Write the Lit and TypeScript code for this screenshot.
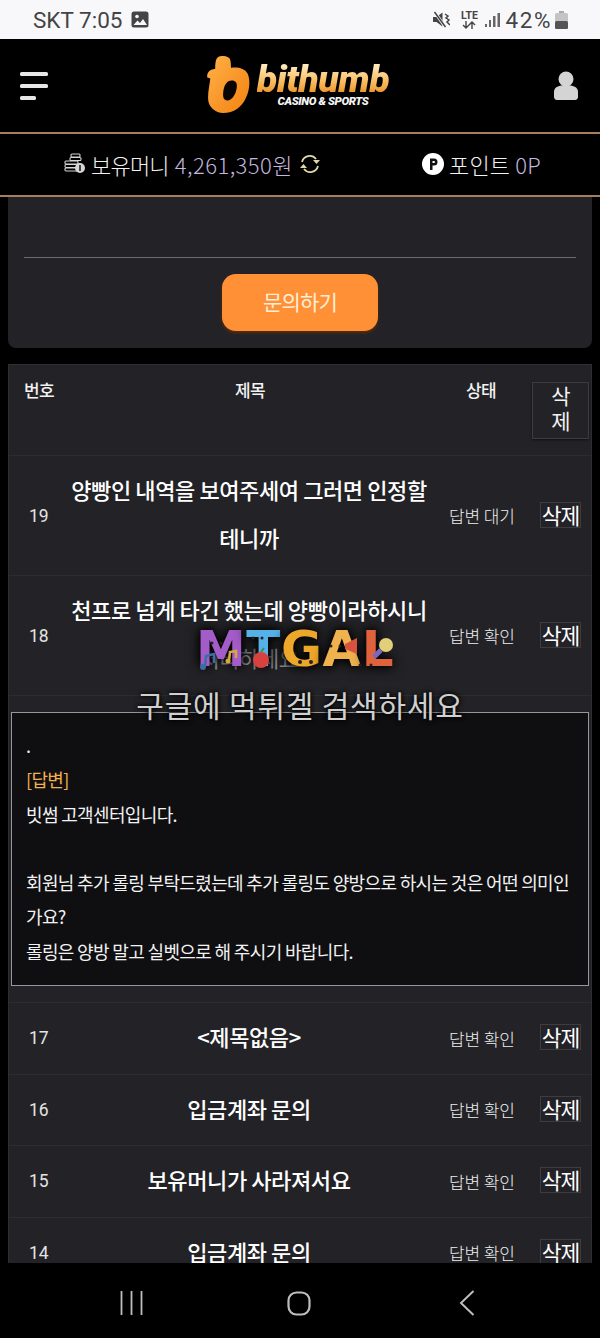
import { LitElement, html, css, svg } from "lit";
import { customElement } from "lit/decorators.js";

const rows = [
  { n: "17", t: "<제목없음>" },
  { n: "16", t: "입금계좌 문의" },
  { n: "15", t: "보유머니가 사라져서요" },
  { n: "14", t: "입금계좌 문의" },
];

@customElement("app-root")
export class AppRoot extends LitElement {
  static styles = css`
    :host { display: block; width: 600px; height: 1338px; background: #000; overflow: hidden; position: relative;
      font-family: "Noto Sans CJK KR", "Noto Sans", sans-serif; color: #f2f2f2; }
    * { box-sizing: border-box; }
    .page { display: flex; flex-direction: column; height: 1338px; }
    .status { height: 39px; flex: none; background: #f8f8fb; color: #444; display: flex; align-items: center; padding: 0 32px 0 33px; font-family: "Roboto", sans-serif; font-size: 22.5px; gap: 9px; }
    .status .sp { flex: 1; }
    .status .r { display: flex; align-items: center; gap: 5px; }
    .pct { letter-spacing: 1.6px; margin-right: -2px; }
    .lte { font: 700 10.5px/10px Roboto, sans-serif; width: 18px; margin: 0 2px 0 5px; display: flex; flex-direction: column; align-items: center; }
    .top { height: 95px; flex: none; border-bottom: 2px solid #a87c5c; display: flex; align-items: center; justify-content: space-between; padding: 0 22px 0 20px; background: #000; }
    .logo { display: flex; align-items: flex-start; gap: 6px; margin-right: 6px; margin-top: -2px; }
    .lt { display: flex; flex-direction: column; align-items: center; margin-top: 7px; }
    .bit { font-family: "Roboto", sans-serif; font-style: italic; font-weight: 900; font-size: 37.5px; line-height: 33px; letter-spacing: -0.5px;
      background: linear-gradient(#fff0c8, #f9b85a 60%, #e88a20); -webkit-background-clip: text; background-clip: text; color: transparent; }
    .cas { font-family: "Roboto", sans-serif; font-style: italic; font-weight: 900; font-size: 11.5px; line-height: 13px; letter-spacing: -0.4px; color: #f5f5f5; margin-top: -1px; margin-left: 0; }
    .bal { height: 63px; flex: none; border-bottom: 2px solid #a87c5c; display: flex; align-items: center; background: #000; font-size: 22px; font-weight: 300; letter-spacing: -0.8px; padding-bottom: 1px; }
    .bal .a { margin-left: 64px; display: flex; align-items: center; gap: 5px; }
    .bal .b { margin-left: 100px; display: flex; align-items: center; gap: 5px; }
    .pur { color: #c4b6de; letter-spacing: 0.45px; margin-left: 2px; }
    .pt { letter-spacing: 0.2px; }
    .pt .pur { letter-spacing: 0; margin-left: 0; }
    .main { flex: 1; min-height: 0; overflow: hidden; padding: 0 8px; display: flex; flex-direction: column; gap: 16px; }
    .form { height: 151px; flex: none; background: #232327; border-radius: 0 0 8px 8px; padding: 60px 16px 0; display: flex; flex-direction: column; align-items: center; }
    .form hr { width: 100%; margin: 0; border: 0; border-top: 1px solid #6d6d71; }
    .btn { margin-top: 16px; width: 156px; height: 57px; border-radius: 14px; background: #ff9036; box-shadow: 0 2px 3px #5a2c08; display: flex; align-items: center; justify-content: center; font-size: 21px; letter-spacing: -0.8px; color: #fdeed8; font-weight: 400; padding-bottom: 3px; }
    .list { flex: none; background: #232327; border: 1px solid #2e2e32; }
    .head { height: 91px; display: grid; grid-template-columns: 61px 361px 1fr; position: relative; border-bottom: 1px solid #2d2d31; font-size: 17px; font-weight: 500; letter-spacing: -0.6px; }
    .hc { padding-top: 13px; line-height: 24px; }
    .c1 { padding-left: 15px; }
    .c2 { padding-left: 165px; }
    .c3 { padding-left: 35px; }
    .hdel { position: absolute; right: 2px; top: 17px; width: 57px; height: 57px; border: 1px solid #3d3d41; box-shadow: 0 1px 2px #111; font-size: 21px; font-weight: 400; line-height: 25px; text-align: center; }
    .row { display: grid; grid-template-columns: 60px 362px 1fr; align-items: center; border-bottom: 1px solid #2d2d31; height: 71.5px; }
    .row.tall { height: 120px; }
    .num { padding-left: 20px; font-family: "Roboto", sans-serif; font-size: 17.5px; font-weight: 400; color: #e4e4e4; }
    .ttl { text-align: center; font-size: 22px; font-weight: 500; line-height: 48px; letter-spacing: -0.4px; color: #fff; margin-left: -2px; padding-bottom: 4px; white-space: nowrap; }
    .tall .ttl { padding-bottom: 6px; }
    .dim { color: #8f8f93; font-weight: 400; }
    .st { font-size: 17px; font-weight: 300; letter-spacing: -0.1px; color: #eee; display: flex; align-items: center; justify-content: space-between; padding: 0 10px 0 18px; white-space: nowrap; }
    .del { width: 41px; height: 26px; border: 1px solid #3d3d41; font-size: 21.5px; font-weight: 400; line-height: 23px; letter-spacing: -1px; text-align: center; color: #fff; margin-top: -2px; }
    .replywrap { height: 307px; padding: 16px 2px; border-bottom: 1px solid #2d2d31; }
    .reply { height: 274px; background: #0f0f11; border: 1px solid #97979a; padding: 15px 14px 0; font-size: 18px; line-height: 34.3px; letter-spacing: -0.65px; font-weight: 400; color: #f2f2f2; white-space: nowrap; }
    .org { color: #f2b04f; }
    .nav { height: 75px; flex: none; background: #000; display: flex; align-items: center; padding-top: 5px; }
    .wm { position: absolute; left: 0; right: 0; top: 622px; text-align: center; pointer-events: none; }
    .mt { font-family: "DejaVu Sans", sans-serif; font-weight: 700; font-size: 50px; line-height: 54px; letter-spacing: 0.5px; position: relative; left: -5px; text-shadow: 0 0 8px #000, 0 0 14px #000; }
    .m1 { color: #a35cc8; }
    .m2 { color: #55b2e8; }
    .m3 { color: #eda82c; }
    .m4 { color: #efb24e; }
    .m5 { color: #e0623c; }
    .deco { position: absolute; left: 190px; top: 0; }
    .gg { font-size: 30px; font-weight: 400; line-height: 40px; color: #d0d0d0; letter-spacing: 0.8px; margin-top: 8px; text-shadow: 0 0 5px #000, 0 0 5px #000; }
  `;

  icon(d: unknown, w: number, h: number) {
    return html`<svg width=${w} height=${h} viewBox="0 0 ${w} ${h}" style="display:block;flex:none">${d}</svg>`;
  }

  del() { return html`<span class="del">삭제</span>`; }

  render() {
    return html`<div class="page">
      <div class="status">
        <span>SKT 7:05</span>
        ${this.icon(svg`<rect x="0.500" y="0.500" width="17" height="16" rx="2.500" fill="#444"/><circle cx="6" cy="5.500" r="1.800" fill="#f8f8fb"/><path d="M2.500 14l4-4.500 2.500 2.500 3-4 4 6z" fill="#f8f8fb"/>`, 18, 17)}
        <span class="sp"></span>
        <div class="r">
          ${this.icon(svg`<path d="M0 6h3.500l6-4.500v14l-6-4.500H0z" fill="#444"/><path d="M1 0l12 17" stroke="#f8f8fb" stroke-width="3"/><path d="M1.500 1l11 15" stroke="#444" stroke-width="1.500"/><path d="M12 3l3 2-2 2 3 2-2 2 3 3" stroke="#444" stroke-width="1.500" fill="none"/>`, 17, 17)}
          <span class="lte">LTE
            <svg width="16" height="8" viewBox="0 0 16 8" style="display:block"><path d="M5 0v7M2 4l3 3 3-3M11 8V1M8 4l3-3 3 3" fill="none" stroke="#444" stroke-width="1.400"/></svg>
          </span>
          ${this.icon(svg`<rect x="0" y="12" width="2" height="3" fill="#666"/><rect x="4" y="8" width="2" height="7" fill="#666"/><rect x="8" y="4" width="2.500" height="11" fill="#666"/><rect x="12.500" y="1" width="2.500" height="14" fill="#666"/>`, 15, 15)}
          <span class="pct">42%</span>
          ${this.icon(svg`<rect x="4" y="0" width="5" height="2" fill="#aaa"/><rect x="0" y="2" width="13" height="16" rx="1.500" fill="#c4c4c4"/><rect x="0" y="10" width="13" height="8" rx="1.500" fill="#555"/>`, 13, 18)}
        </div>
      </div>

      <div class="top">
        ${this.icon(svg`<g fill="#e6e6e6"><rect x="0" y="0" width="28" height="4" rx="1.500"/><rect x="0" y="12" width="28" height="4" rx="1.500"/><rect x="0" y="24" width="16" height="4" rx="1.500"/></g>`, 28, 28)}
        <div class="logo">
          <svg width="44" height="57" viewBox="0 0 44 58" style="display:block;flex:none">
            <defs><linearGradient id="lg" x1="0" y1="0" x2="1" y2="1"><stop offset="0" stop-color="#ffb347"/><stop offset=".55" stop-color="#f9962a"/><stop offset="1" stop-color="#f6820f"/></linearGradient></defs>
            <path d="M11 1c4-2 10-1 12 2 1 3 1 7 1 9 6-1 14 0 17 6 3 7 2 17-2 25-4 9-12 15-23 15C8 58 2 52 1 46c-1-7 1-15 2-23L0 22c-1-3 1-7 4-8l4-1c0-4 0-10 3-12z" fill="url(#lg)"/>
            <path d="M21 26c4-2 9-1 9 4 0 6-3 13-8 15-4 1-6-1-6-5 0-5 1-11 5-14z" fill="#0a0500"/>
          </svg>
          <div class="lt"><div class="bit">bithumb</div><div class="cas">CASINO &amp; SPORTS</div></div>
        </div>
        ${this.icon(svg`<circle cx="12" cy="8" r="7.500" fill="#d4d4d4"/><path d="M0 26v-5c0-5 5-7 12-7s12 2 12 7v5c0 1.500-1 3-3 3H3c-2 0-3-1.500-3-3z" fill="#d4d4d4"/>`, 24, 29)}
      </div>

      <div class="bal">
        <div class="a">
          ${this.icon(svg`<g fill="none" stroke="#d6d6d6" stroke-width="1.100"><rect x="7" y="1" width="9" height="3" rx="1"/><rect x="6" y="4.500" width="11" height="3" rx="1"/><rect x="1" y="8" width="13" height="3" rx="1"/><rect x="1" y="11.500" width="13" height="3" rx="1"/><rect x="1" y="15" width="13" height="3" rx="1"/></g><circle cx="16" cy="15" r="5" fill="#d6d6d6"/><path d="M16 12v6" stroke="#111" stroke-width="1.500"/>`, 22, 22)}
          <span>보유머니 <span class="pur">4,261,350원</span></span>
          ${this.icon(svg`<g fill="none" stroke="#e3d9a6" stroke-width="1.800"><path d="M4 9a8 8 0 0 1 14-3"/><path d="M20 13a8 8 0 0 1-14 3"/></g><path d="M15 7h7l-3.500 4zM9 15H2l3.500-4z" fill="#e3d9a6"/>`, 24, 22)}
        </div>
        <div class="b">
          ${this.icon(svg`<circle cx="11" cy="11" r="11" fill="#fff"/><path d="M8 5.500h4a3.500 3.500 0 0 1 0 7h-1.500V17H8zM10.500 8v2h1.500a1 1 0 0 0 0-2z" fill="#111"/>`, 22, 22)}
          <span class="pt">포인트 <span class="pur">0P</span></span>
        </div>
      </div>

      <div class="main">
        <div class="form"><hr /><div class="btn">문의하기</div></div>
        <div class="list">
          <div class="head"><div class="hc c1">번호</div><div class="hc c2">제목</div><div class="hc c3">상태</div><div class="hdel">삭<br />제</div></div>
          <div class="row tall"><div class="num">19</div><div class="ttl">양빵인 내역을 보여주세여 그러면 인정할<br />테니까</div><div class="st"><span>답변 대기</span>${this.del()}</div></div>
          <div class="row tall"><div class="num">18</div><div class="ttl">천프로 넘게 타긴 했는데 양빵이라하시니<br /><span class="dim">처리하세요</span></div><div class="st"><span>답변 확인</span>${this.del()}</div></div>
          <div class="replywrap"><div class="reply">.<br /><span class="org">[답변]</span><br />빗썸 고객센터입니다.<br /><br />회원님 추가 롤링 부탁드렸는데 추가 롤링도 양방으로 하시는 것은 어떤 의미인<br />가요?<br />롤링은 양방 말고 실벳으로 해 주시기 바랍니다.</div></div>
          ${rows.map((r) => html`<div class="row"><div class="num">${r.n}</div><div class="ttl">${r.t}</div><div class="st"><span>답변 확인</span>${this.del()}</div></div>`)}
        </div>
      </div>

      <div class="nav">
        <div style="margin-left:120px">${this.icon(svg`<path d="M1.500 0v24M11.500 0v24M21.500 0v24" stroke="#bdbdbd" stroke-width="1.800"/>`, 24, 24)}</div>
        <div style="margin-left:143px">${this.icon(svg`<rect x="1.500" y="1.500" width="21" height="22" rx="8" fill="none" stroke="#bdbdbd" stroke-width="2.200"/>`, 25, 25)}</div>
        <div style="margin-left:147px">${this.icon(svg`<path d="M14.500 1L2 13l12.500 12" fill="none" stroke="#bdbdbd" stroke-width="2"/>`, 16, 26)}</div>
      </div>
    </div>

    <div class="wm">
      <div class="mt"><span class="m1">M</span><span class="m2">T</span><span class="m3">G</span><span class="m4">A</span><span class="m5">L</span>
        <svg class="deco" width="220" height="54" viewBox="0 0 220 54">
          <circle cx="76" cy="38" r="8" fill="#d9413f"/><path d="M76 30l3-4" stroke="#4a8a3a" stroke-width="2"/>
          <path d="M20 44l1-10 8-2v9" fill="none" stroke="#3a6ea5" stroke-width="2.500"/><circle cx="18" cy="45" r="3" fill="#3a6ea5"/>
          <path d="M44 38l1-8 6-1v7" fill="none" stroke="#d7a83c" stroke-width="2.500"/><circle cx="43" cy="39" r="2.500" fill="#d7a83c"/>
          <path d="M160 22l12-6v16l-12-5z" fill="#d9513f"/>
          <circle cx="201" cy="23" r="7" fill="#e2cf7a"/><path d="M196 28l-7 7" stroke="#7a68c0" stroke-width="5"/>
          <g fill="#222"><circle cx="27" cy="21" r="1.500"/><circle cx="36" cy="21" r="1.500"/><circle cx="68" cy="16" r="1.500"/><circle cx="77" cy="16" r="1.500"/><circle cx="155" cy="24" r="1.500"/><circle cx="146" cy="24" r="1.500"/><circle cx="175" cy="43" r="1.500"/><circle cx="186" cy="43" r="1.500"/><circle cx="115" cy="40" r="2"/><circle cx="126" cy="40" r="2"/></g>
        </svg>
      </div>
      <div class="gg">구글에 먹튀겔 검색하세요</div>
    </div>`;
  }
}
